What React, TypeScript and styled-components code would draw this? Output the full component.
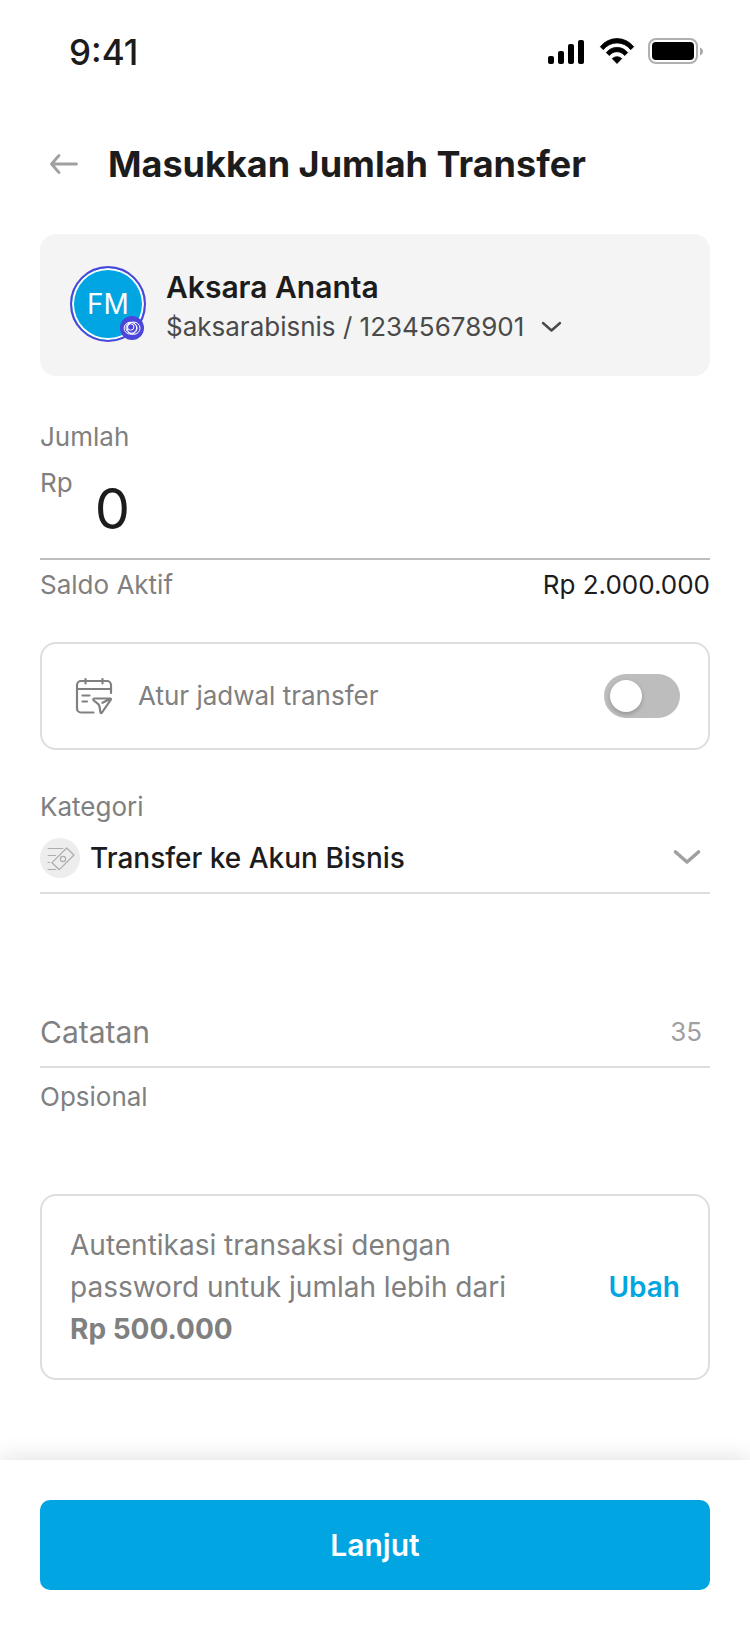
import { useState } from "react"
import styled, { createGlobalStyle } from "styled-components"

const GlobalStyle = createGlobalStyle`
    * {
        box-sizing: border-box;
    }

    body {
        margin: 0;
        background-color: #FFF;
        font-family: 'Inter', 'Liberation Sans', sans-serif;
        color: #1C1C1C;
    }

    button, input, select {
        margin: 0;
        padding: 0;
        border: none;
        background: none;
        font-family: inherit;
        color: inherit;
    }
`

const Page = styled.div`
    min-height: 100vh;
    display: flex;
    flex-direction: column;
`

const StatusBar = styled.div`
    height: 104px;
    padding: 0 46px 0 69px;
    display: flex;
    align-items: center;
    justify-content: space-between;
`

const Clock = styled.span`
    font-size: 35px;
    line-height: 40px;
    font-weight: 500;
`

const Header = styled.header`
    padding: 36px 40px 46px 48px;
    display: flex;
    align-items: center;
    gap: 28px;
`

const IconButton = styled.button`
    display: flex;
    cursor: pointer;
`

const Title = styled.h1`
    margin: 0;
    font-size: 36px;
    line-height: 48px;
    font-weight: 700;
`

const Content = styled.main`
    padding: 0 40px 80px;
    display: flex;
    flex-direction: column;
`

const RecipientCard = styled.section`
    padding: 32px 30px 29px;
    display: flex;
    align-items: flex-start;
    gap: 20px;
    border-radius: 16px;
    background-color: #F4F4F4;
`

const Avatar = styled.div`
    position: relative;
    width: 76px;
    height: 76px;
    display: flex;
    align-items: center;
    justify-content: center;
    border: 2px solid #4B45D9;
    border-radius: 50%;
    background-color: #00A5E1;
    box-shadow: inset 0 0 0 2px #FFF;
    font-size: 28px;
    color: #FFF;
`

const AvatarBadge = styled.svg`
    position: absolute;
    right: 0;
    bottom: 0;
`

const RecipientInfo = styled.div`
    padding-top: 1px;
`

const RecipientName = styled.div`
    font-size: 30px;
    line-height: 40px;
    font-weight: 600;
`

const RecipientAccount = styled.div`
    display: flex;
    align-items: center;
    gap: 12px;
    font-size: 26px;
    line-height: 40px;
    color: #4A4A4A;
`

const Label = styled.label`
    font-size: 26px;
    line-height: 40px;
    color: #808080;
`

const Field = styled.div<{ $space: number }>`
    margin-top: ${({ $space }) => $space}px;
    display: flex;
    flex-direction: column;
`

const AmountRow = styled.div`
    padding: 6px 0 4px;
    display: flex;
    align-items: flex-start;
    gap: 22px;
    border-bottom: 2px solid #BDBDBD;
`

const AmountInput = styled.input`
    flex: 1;
    min-width: 0;
    height: 91px;
    font-size: 56px;
    outline: none;
`

const BalanceRow = styled.div`
    padding-top: 5px;
    display: flex;
    justify-content: space-between;
    font-size: 26px;
    line-height: 40px;
`

const Muted = styled.span`
    font-size: 26px;
    line-height: 40px;
    color: #808080;
`

const OutlinedCard = styled.section<{ $space: number }>`
    margin-top: ${({ $space }) => $space}px;
    padding: 28px;
    display: flex;
    align-items: center;
    justify-content: space-between;
    gap: 20px;
    border: 2px solid #DEDEDE;
    border-radius: 16px;
`

const ScheduleLabel = styled(Label)`
    flex: 1;
`

const Switch = styled.input`
    appearance: none;
    width: 76px;
    height: 44px;
    padding: 6px;
    display: flex;
    border-radius: 22px;
    background-color: #BDBDBD;
    cursor: pointer;

    &::before {
        content: '';
        width: 32px;
        height: 32px;
        border-radius: 50%;
        background-color: #FFF;
        box-shadow: 0 2px 4px rgba(39, 49, 66, 0.3);
    }

    &:checked {
        justify-content: flex-end;
        background-color: #00A5E1;
    }
`

const CategoryRow = styled.div`
    padding: 11px 8px 14px 0;
    display: flex;
    align-items: center;
    gap: 10px;
    border-bottom: 2px solid #DEDEDE;
`

const CategorySelect = styled.select`
    flex: 1;
    min-width: 0;
    height: 40px;
    appearance: none;
    font-size: 28px;
    font-weight: 500;
    outline: none;
    cursor: pointer;
`

const NoteRow = styled.div`
    padding: 0 8px 10px 0;
    display: flex;
    align-items: center;
    border-bottom: 2px solid #DEDEDE;
`

const NoteInput = styled.input`
    flex: 1;
    min-width: 0;
    height: 48px;
    font-size: 30px;
    outline: none;

    &::placeholder {
        color: #808080;
        opacity: 1;
    }
`

const NoteCounter = styled.span`
    font-size: 26px;
    line-height: 40px;
    color: #A0A0A0;
`

const NoteHint = styled(Muted)`
    padding-top: 9px;
`

const AuthText = styled.p`
    margin: 0;
    max-width: 460px;
    font-size: 28px;
    line-height: 42px;
    color: #808080;
`

const LinkButton = styled.button`
    font-size: 28px;
    line-height: 42px;
    font-weight: 600;
    color: #00A5E1;
    cursor: pointer;
`

const Footer = styled.footer`
    margin-top: auto;
    padding: 40px 40px 60px;
    background-color: #FFF;
    box-shadow: 0 0 24px rgba(0, 0, 0, 0.14);
`

const SubmitButton = styled.button`
    width: 100%;
    height: 90px;
    border-radius: 10px;
    background-color: #00A5E1;
    font-size: 30px;
    font-weight: 600;
    color: #FFF;
    cursor: pointer;
`

const StatusIcons = () => (
    <svg width="156" height="28" viewBox="0 0 156 28" aria-hidden="true">
        <rect x="0" y="18" width="6" height="8" rx="2" />
        <rect x="10" y="13" width="6" height="13" rx="2" />
        <rect x="20" y="6" width="6" height="20" rx="2" />
        <rect x="30" y="2" width="6" height="24" rx="2" />
        <path d="M52.3 8.7a21.2 21.2 0 0 1 33.4 0l-3 3a17.2 17.2 0 0 0-27.4 0z" strokeLinejoin="round" stroke="#000" strokeWidth="0.8" />
        <path d="M58.3 14.6a13.6 13.6 0 0 1 21.4 0l-3 3a9.6 9.6 0 0 0-15.4 0z" strokeLinejoin="round" stroke="#000" strokeWidth="0.8" />
        <path d="M64.3 20.6a6.8 6.8 0 0 1 9.4 0l-4.7 4.9z" strokeLinejoin="round" stroke="#000" strokeWidth="0.8" />
        <rect x="101" y="1" width="48" height="24" rx="7" fill="none" stroke="#B0B0B0" strokeWidth="2" />
        <rect x="104" y="4" width="42" height="18" rx="4" />
        <path d="M152 9.5c4 1.5 4 6.5 0 8z" fill="#A8A8A8" />
    </svg>
)

const BackIcon = () => (
    <svg width="32" height="32" viewBox="0 0 32 32" fill="none" stroke="#A0A0A0" strokeWidth="2.8" strokeLinecap="round" strokeLinejoin="round">
        <path d="M28.5 16H3.5M11 7.5L3.5 16l7.5 8.5" />
    </svg>
)

const CalendarIcon = () => (
    <svg width="48" height="48" viewBox="0 0 48 48" fill="none" stroke="#808080" strokeWidth="2.2" strokeLinecap="round" strokeLinejoin="round" aria-hidden="true">
        <path d="M41 21v-8a4 4 0 0 0-4-4H11a4 4 0 0 0-4 4v23.5a4 4 0 0 0 4 4h12.5M7 17h34M15.5 7v4.5M32.5 7v4.5M12.5 23.5h7M12.5 29.5H17" />
        <path d="M24.5 26.5H40q1.5 0 .7 1.3l-8.7 12.7q-1.2 1.3-1.6-.3l-.9-5.7q-.3-1.7-1.5-2.7l-4.3-3.3q-1.2-1.5.8-2zM32.5 30.8l8-4" />
    </svg>
)

const CategoryIcon = () => (
    <svg width="40" height="40" viewBox="0 0 40 40" fill="none" stroke="#ADADAD" strokeWidth="1.2" strokeLinejoin="round" aria-hidden="true">
        <circle cx="20" cy="20" r="20" fill="#EDEDED" stroke="none" />
        <path d="M7.7 10.5h15.6M7.7 17.5H16M7.5 24.5H10M7.7 31.5H16" />
        <path d="M26.7 10l7.3 7-14.7 14.7-7.3-7z" />
        <circle cx="23" cy="21" r="2.6" />
    </svg>
)

const Chevron = ({ large = false }: { large?: boolean }) => large ? (
    <svg width="30" height="20" viewBox="0 0 30 20" fill="none" stroke="#A0A0A0" strokeWidth="3.6" strokeLinecap="round" strokeLinejoin="round" aria-hidden="true">
        <path d="M3.5 4L15 14l11.5-10" />
    </svg>
) : (
    <svg width="30" height="20" viewBox="0 0 30 20" fill="none" stroke="#4A4A4A" strokeWidth="2.4" strokeLinecap="round" strokeLinejoin="round">
        <path d="M7 6l8.5 7.5L24 6" />
    </svg>
)

const MAX_NOTE = 35

const App = () => {
    const [amount, setAmount] = useState("0")
    const [note, setNote] = useState("")
    const [scheduled, setScheduled] = useState(false)

    return (
        <Page>
            <GlobalStyle />
            <StatusBar>
                <Clock>9:41</Clock>
                <StatusIcons />
            </StatusBar>
            <Header>
                <IconButton type="button" aria-label="Kembali"><BackIcon /></IconButton>
                <Title>Masukkan Jumlah Transfer</Title>
            </Header>
            <Content>
                <RecipientCard>
                    <Avatar>
                        FM
                        <AvatarBadge width="24" height="24" viewBox="0 0 24 24" fill="none" stroke="#FFF" strokeWidth="1" aria-hidden="true">
                            <circle cx="12" cy="12" r="12" fill="#4B45D9" stroke="none" />
                            <circle cx="10.7" cy="11" r="3.2" />
                            <circle cx="11.3" cy="11.9" r="5.3" />
                            <ellipse cx="10.6" cy="12.2" rx="6.5" ry="6" />
                            <ellipse cx="13.6" cy="12.2" rx="6.4" ry="6.2" />
                        </AvatarBadge>
                    </Avatar>
                    <RecipientInfo>
                        <RecipientName>Aksara Ananta</RecipientName>
                        <RecipientAccount>
                            <span>$aksarabisnis / 12345678901</span>
                            <IconButton type="button" aria-label="Pilih akun"><Chevron /></IconButton>
                        </RecipientAccount>
                    </RecipientInfo>
                </RecipientCard>

                <Field $space={41}>
                    <Label htmlFor="jumlah">Jumlah</Label>
                    <AmountRow>
                        <Muted>Rp</Muted>
                        <AmountInput id="jumlah" inputMode="numeric" value={amount} onChange={(e) => setAmount(e.target.value)} />
                    </AmountRow>
                    <BalanceRow>
                        <Muted>Saldo Aktif</Muted>
                        <span>Rp 2.000.000</span>
                    </BalanceRow>
                </Field>

                <OutlinedCard $space={37}>
                    <CalendarIcon />
                    <ScheduleLabel htmlFor="jadwal">Atur jadwal transfer</ScheduleLabel>
                    <Switch id="jadwal" type="checkbox" role="switch" checked={scheduled} onChange={(e) => setScheduled(e.target.checked)} />
                </OutlinedCard>

                <Field $space={37}>
                    <Label htmlFor="kategori">Kategori</Label>
                    <CategoryRow>
                        <CategoryIcon />
                        <CategorySelect id="kategori">
                            <option>Transfer ke Akun Bisnis</option>
                        </CategorySelect>
                        <Chevron large />
                    </CategoryRow>
                </Field>

                <Field $space={114}>
                    <NoteRow>
                        <NoteInput
                            aria-label="Catatan"
                            aria-describedby="catatan-info"
                            placeholder="Catatan"
                            maxLength={MAX_NOTE}
                            value={note}
                            onChange={(e) => setNote(e.target.value)}
                        />
                        <NoteCounter>{MAX_NOTE - note.length}</NoteCounter>
                    </NoteRow>
                    <NoteHint id="catatan-info">Opsional</NoteHint>
                </Field>

                <OutlinedCard $space={77}>
                    <AuthText>Autentikasi transaksi dengan password untuk jumlah lebih dari <strong>Rp 500.000</strong></AuthText>
                    <LinkButton type="button">Ubah</LinkButton>
                </OutlinedCard>
            </Content>
            <Footer>
                <SubmitButton type="button">Lanjut</SubmitButton>
            </Footer>
        </Page>
    )
}

export default App
